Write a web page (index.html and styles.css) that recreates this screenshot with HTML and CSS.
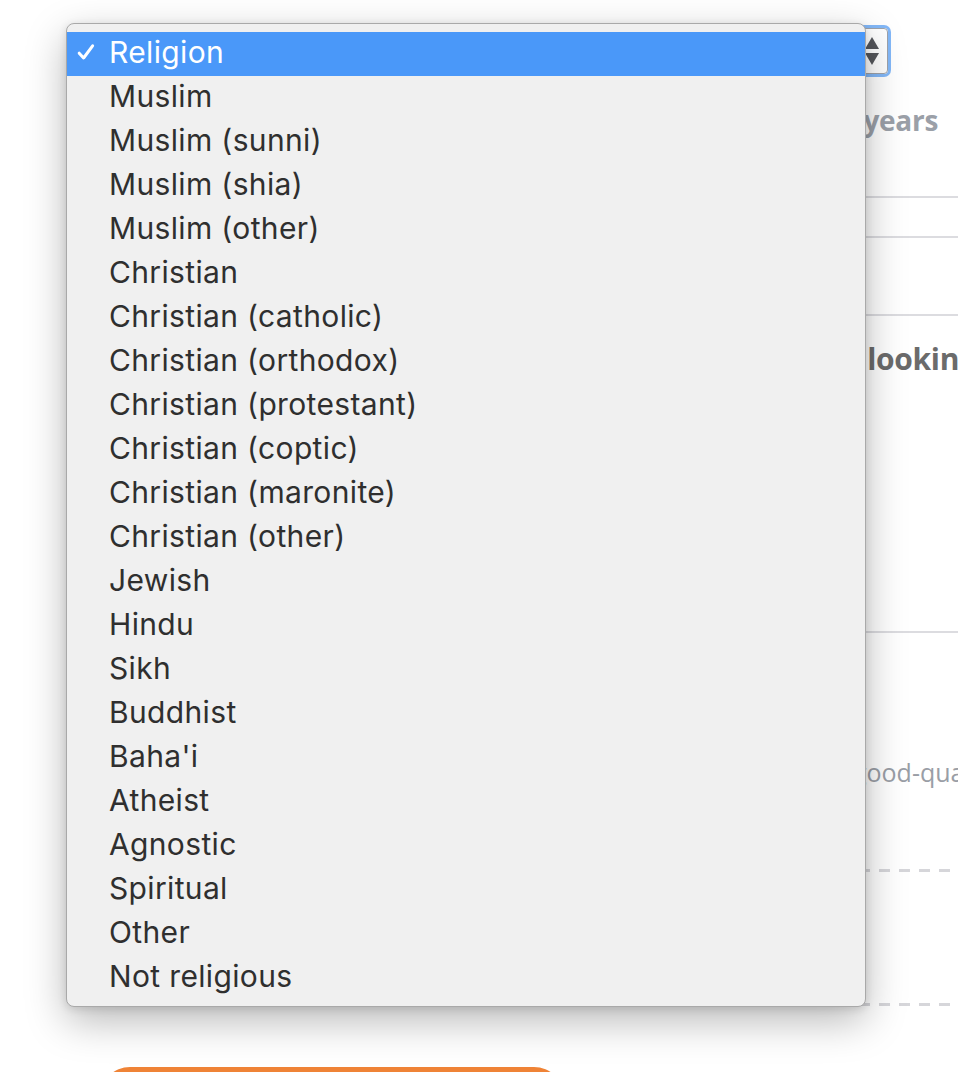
FILE: index.html
```html
<!DOCTYPE html>
<html lang="en">
<head>
<meta charset="utf-8">
<title>Religion select</title>
<link rel="stylesheet" href="styles.css">
</head>
<body>
<div class="page">
  <form class="form">
    <div class="select-box" aria-label="Religion">
      <span class="stepper">
        <svg width="16" height="34" viewBox="0 0 16 34"><path d="M8 3 L15 15 L1 15 Z" fill="#55575c"/><path d="M1 19 L15 19 L8 31 Z" fill="#55575c"/></svg>
      </span>
    </div>
    <div class="range">Between 25 and 35 years</div>
    <div class="field f1"></div>
    <div class="field f2"></div>
    <div class="field f3"></div>
    <h3 class="heading">What are you looking for?</h3>
    <div class="options"></div>
    <p class="hint">Upload a good-quality photo of yourself</p>
    <div class="dash d1"></div>
    <div class="dash d2"></div>
    <button type="button" class="submit" aria-label="Continue"></button>
  </form>

  <div class="menu" role="listbox">
    <div class="item selected"><span class="check"><svg width="18" height="18" viewBox="0 0 18 18"><path d="M2.2 10.2 L6.6 15 L15.6 2.8" fill="none" stroke="#fff" stroke-width="3" stroke-linecap="round" stroke-linejoin="round"/></svg></span><span>Religion</span></div>
    <div class="item"><span class="check"></span><span>Muslim</span></div>
    <div class="item"><span class="check"></span><span>Muslim (sunni)</span></div>
    <div class="item"><span class="check"></span><span>Muslim (shia)</span></div>
    <div class="item"><span class="check"></span><span>Muslim (other)</span></div>
    <div class="item"><span class="check"></span><span>Christian</span></div>
    <div class="item"><span class="check"></span><span>Christian (catholic)</span></div>
    <div class="item"><span class="check"></span><span>Christian (orthodox)</span></div>
    <div class="item"><span class="check"></span><span>Christian (protestant)</span></div>
    <div class="item"><span class="check"></span><span>Christian (coptic)</span></div>
    <div class="item"><span class="check"></span><span>Christian (maronite)</span></div>
    <div class="item"><span class="check"></span><span>Christian (other)</span></div>
    <div class="item"><span class="check"></span><span>Jewish</span></div>
    <div class="item"><span class="check"></span><span>Hindu</span></div>
    <div class="item"><span class="check"></span><span>Sikh</span></div>
    <div class="item"><span class="check"></span><span>Buddhist</span></div>
    <div class="item"><span class="check"></span><span>Baha'i</span></div>
    <div class="item"><span class="check"></span><span>Atheist</span></div>
    <div class="item"><span class="check"></span><span>Agnostic</span></div>
    <div class="item"><span class="check"></span><span>Spiritual</span></div>
    <div class="item"><span class="check"></span><span>Other</span></div>
    <div class="item"><span class="check"></span><span>Not religious</span></div>
  </div>
</div>
</body>
</html>
```

FILE: styles.css
```css
html, body {
  margin: 0;
  padding: 0;
  background: #ffffff;
}

.page {
  position: relative;
  width: 958px;
  height: 1072px;
  overflow: hidden;
  font-family: "Open Sans", "Liberation Sans", sans-serif;
}

.form {
  margin: 0;
  padding: 28px 0 0 98px;
  display: flex;
  flex-direction: column;
}

.select-box {
  width: 788px;
  height: 46px;
  box-sizing: border-box;
  border: 1px solid #9fa3aa;
  border-radius: 4px;
  box-shadow: 0 0 0 3px rgba(90, 160, 245, 0.75);
  display: flex;
  align-items: center;
  justify-content: flex-end;
  padding: 0 7px 0 12px;
  margin-left: 2px;
}

.stepper {
  display: flex;
  align-items: center;
}

.range {
  margin-top: 22px;
  height: 48px;
  line-height: 48px;
  font-size: 28px;
  font-weight: 700;
  color: #9ba0a8;
  white-space: nowrap;
  text-align: right;
  padding-right: 20px;
  letter-spacing: -0.3px;
}

.field {
  border-bottom: 2px solid #dcdce0;
  margin-right: -20px;
}
.f1 { height: 52px; }
.f2 { height: 38px; }
.f3 { height: 76px; }

.heading {
  margin: 23px 0 0 0;
  height: 40px;
  line-height: 40px;
  font-size: 30px;
  font-weight: 700;
  color: #6b6b6b;
  white-space: nowrap;
  padding-left: 565px;
  letter-spacing: -0.3px;
}

.options {
  height: 252px;
  border-bottom: 2px solid #dcdce0;
  margin-right: -20px;
}

.hint {
  margin: 124px 0 0 0;
  height: 30px;
  line-height: 30px;
  font-size: 25px;
  color: #9a9ea6;
  white-space: nowrap;
  padding-left: 644px;
}

.dash {
  height: 3px;
  background: repeating-linear-gradient(to right, #d6d6da 0 11px, transparent 11px 20px);
  background-position: 1px 0;
}
.d1 { margin-top: 82px; }
.d2 { margin-top: 131px; }

.submit {
  margin-top: 61px;
  margin-left: 2px;
  width: 464px;
  height: 60px;
  border: none;
  border-radius: 30px;
  background: #ef8336;
}

/* Native-style popup menu overlay */
.menu {
  position: absolute;
  left: 66px;
  top: 23px;
  width: 800px;
  height: 984px;
  padding: 8px 0 7px 0;
  box-sizing: border-box;
  background: #f0f0f0;
  border: 1px solid #a9a9a9;
  border-radius: 8px;
  box-shadow: 0 14px 40px rgba(0, 0, 0, 0.28), 0 2px 8px rgba(0, 0, 0, 0.12);
  font-family: "Inter", "Roboto", "Liberation Sans", sans-serif;
  font-size: 30px;
  letter-spacing: 0.35px;
  color: #2f2f2f;
  display: flex;
  flex-direction: column;
}

.item {
  height: 44px;
  flex: none;
  display: flex;
  align-items: center;
  white-space: nowrap;
  padding-bottom: 5px;
  box-sizing: border-box;
}

.item.selected {
  background: #4a98f9;
  color: #ffffff;
}

.check {
  width: 42px;
  flex: none;
  display: flex;
  padding-left: 10px;
  box-sizing: border-box;
}
```
